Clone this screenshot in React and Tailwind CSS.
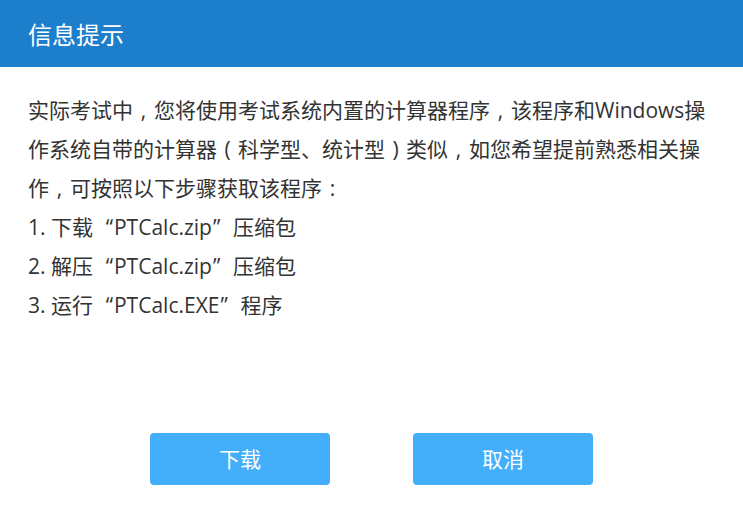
const cjk = { fontFamily: '"Noto Sans CJK SC", sans-serif' };

// full-width cell holding a centred punctuation mark
function C({ children }) {
  return <span className="inline-block w-[1em] text-center">{children}</span>;
}

function QL() {
  return <span className="inline-block w-[1em] text-right pr-[1px]">“</span>;
}

function QR() {
  return <span className="inline-block w-[1em] text-left pl-[1px]">”</span>;
}

export default function App() {
  return (
    <div className="w-[743px] h-[521px] bg-white flex flex-col font-['Open_Sans','Noto_Sans_CJK_SC',sans-serif]">
      <div className="h-[67px] bg-[#1d7ecb] flex items-center pl-[28px]">
        <h1 className="text-white text-[24px] font-['Noto_Sans_CJK_SC',sans-serif] leading-none">信息提示</h1>
      </div>

      <div className="flex-1 pt-[24px] px-[28px] text-[#333] text-[21px] leading-[39px]">
        <p>
          实际考试中<C>,</C>您将使用考试系统内置的计算器程序<C>,</C>该程序和Windows操作系统自带的计算器<C>(</C>科学型、统计型<C>)</C>类似<C>,</C>如您希望提前熟悉相关操作<C>,</C>可按照以下步骤获取该程序<C>:</C>
        </p>
        <p>1. 下载<QL />PTCalc.zip<QR />压缩包</p>
        <p>2. 解压<QL />PTCalc.zip<QR />压缩包</p>
        <p>3. 运行<QL />PTCalc.EXE<QR />程序</p>
      </div>

      <div className="flex justify-center gap-[83px] pb-[36px]">
        <button className="w-[180px] h-[52px] rounded-[4px] bg-[#43aefa] text-white text-[21px]" style={cjk}>
          下载
        </button>
        <button className="w-[180px] h-[52px] rounded-[4px] bg-[#43aefa] text-white text-[21px]" style={cjk}>
          取消
        </button>
      </div>
    </div>
  );
}
